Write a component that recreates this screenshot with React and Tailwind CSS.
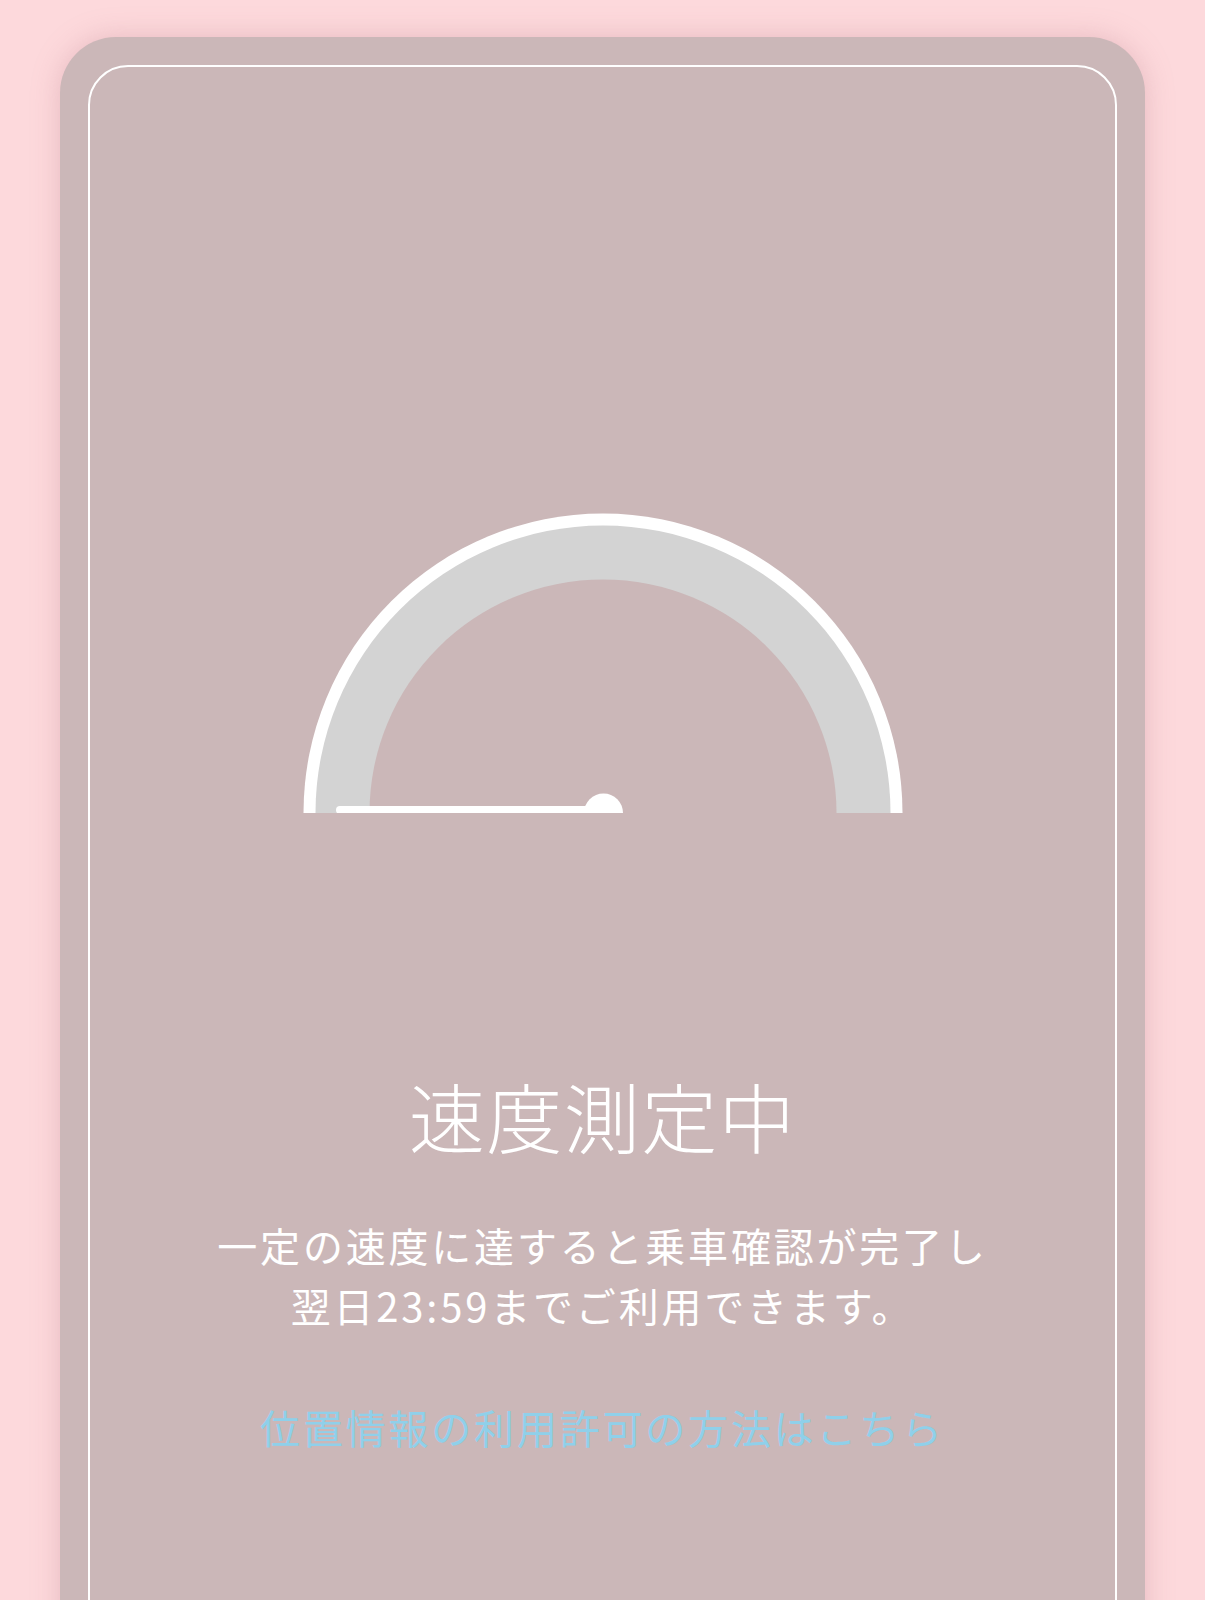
export default function App() {
    return (
        <div className="min-h-[1600px] bg-[#fdd9dc] px-[60px] pt-[37px] overflow-hidden" style={{ height: 1600 }}>
            <div className="rounded-[56px] bg-[#cbb7b8] p-[28px] pb-0 h-[1700px] shadow-[0_0_28px_rgba(190,130,140,0.35)]">
                <div
                    className="rounded-[40px] border-2 border-white h-full flex flex-col items-center text-white"
                    style={{ fontFamily: '"Noto Sans CJK JP", "Noto Sans", sans-serif' }}
                >
                    {/* Gauge */}
                    <svg className="mt-[446px] block" width="600" height="300" viewBox="0 0 600 300">
                        <circle cx="300" cy="300" r="299.5" fill="#ffffff" />
                        <circle cx="300" cy="300" r="287.5" fill="#d3d3d3" />
                        <circle cx="300" cy="300" r="233.5" fill="#cbb7b8" />
                        <rect x="33" y="293" width="270" height="8" rx="4" fill="#ffffff" />
                        <circle cx="300.5" cy="300" r="19.5" fill="#ffffff" />
                    </svg>

                    <h1 className="mt-[257px] text-[76px] leading-[90px] font-light tracking-[0.02em]">
                        速度測定中
                    </h1>

                    <p className="mt-[55px] text-[40px] leading-[60px] font-normal tracking-[0.07em] text-center">
                        一定の速度に達すると乗車確認が完了し
                        <br />
                        翌日23:59までご利用できます。
                    </p>

                    <a href="#" className="mt-[62px] text-[40px] leading-[60px] font-normal tracking-[0.07em] text-[#8fd0ea]">
                        位置情報の利用許可の方法はこちら
                    </a>
                </div>
            </div>
        </div>
    );
}
